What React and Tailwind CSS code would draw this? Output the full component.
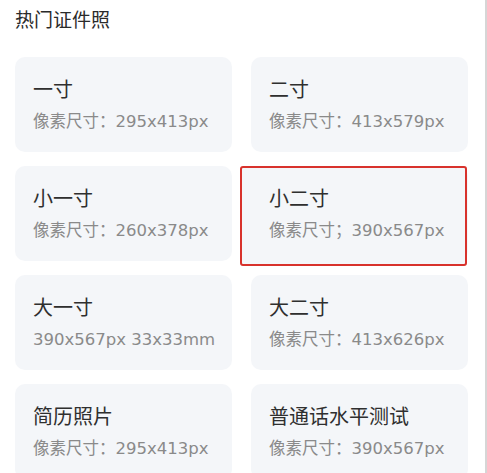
import React from "react";

const items = [
  { title: "一寸", desc: "像素尺寸：295x413px" },
  { title: "二寸", desc: "像素尺寸：413x579px" },
  { title: "小一寸", desc: "像素尺寸：260x378px" },
  { title: "小二寸", desc: "像素尺寸；390x567px", active: true },
  { title: "大一寸", desc: "390x567px 33x33mm" },
  { title: "大二寸", desc: "像素尺寸：413x626px" },
  { title: "简历照片", desc: "像素尺寸：295x413px" },
  { title: "普通话水平测试", desc: "像素尺寸：390x567px" },
];

function Card({ title, desc, active }) {
  return (
    <div className="relative h-[95px] rounded-[10px] bg-[#f4f6f9]">
      {active && (
        <div className="pointer-events-none absolute -left-[11px] top-0 right-[1px] -bottom-[5px] rounded-[3px] border-2 border-[#d8322c] bg-[#f4f6f9]" />
      )}
      <div className="relative flex flex-col gap-[6px] pl-[18px] pt-[19px]">
        <div className="text-[20px] leading-[28px] text-[#2f2f2f]">{title}</div>
        <div className="text-[16.5px] leading-[24px] text-[#8a8a8a]">{desc}</div>
      </div>
    </div>
  );
}

export default function App() {
  return (
    <div
      className="h-[473px] w-[487px] overflow-hidden border-r-2 border-[#d6d6d6] bg-white"
      style={{ fontFamily: '"DejaVu Sans", "Noto Sans CJK SC", sans-serif' }}
    >
      <div className="px-[15px] pt-[6px]">
        <h2 className="text-[19px] leading-[28px] text-[#2a2a2a]">热门证件照</h2>
        <div className="mt-[23px] grid grid-cols-[217px_217px] gap-x-[19px] gap-y-[14px]">
          {items.map((it) => (
            <Card key={it.title} {...it} />
          ))}
        </div>
      </div>
    </div>
  );
}
